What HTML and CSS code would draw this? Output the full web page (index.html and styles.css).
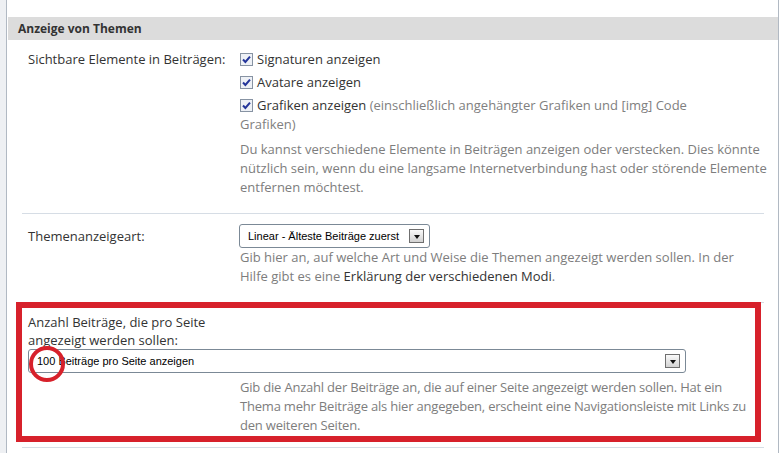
FILE: index.html
```html
<!DOCTYPE html>
<html lang="de">
<head>
  <meta charset="UTF-8">
  <title>Anzeige von Themen</title>
  <link rel="stylesheet" href="styles.css">
</head>
<body>
  <svg class="defs" xmlns="http://www.w3.org/2000/svg">
    <symbol id="checked" viewBox="0 0 13 13">
      <rect x="0.5" y="0.5" width="12" height="12" fill="#eef1f6" stroke="#8793a3"/>
      <path d="M3 6.5 L5.4 9 L10 3.6" fill="none" stroke="#24359a" stroke-width="2"/>
    </symbol>
  </svg>

  <div class="page">
    <div class="gutter"></div>
    <div class="panel">
      <h3 class="panel-head">Anzeige von Themen</h3>

      <div class="row">
        <div class="label">Sichtbare Elemente in Beiträgen:</div>
        <div class="field">
          <div class="checks">
            <label class="check"><svg class="box"><use href="#checked"/></svg>Signaturen anzeigen</label>
            <label class="check"><svg class="box"><use href="#checked"/></svg>Avatare anzeigen</label>
            <label class="check"><svg class="box"><use href="#checked"/></svg>Grafiken anzeigen <span class="muted">(einschließlich angehängter Grafiken und [img] Code Grafiken)</span></label>
          </div>
          <p class="explain">Du kannst verschiedene Elemente in Beiträgen anzeigen oder verstecken. Dies könnte<br>
            nützlich sein, wenn du eine langsame Internetverbindung hast oder störende Elemente<br>
            entfernen möchtest.</p>
        </div>
      </div>

      <div class="row">
        <div class="label label-mid">Themenanzeigeart:</div>
        <div class="field">
          <div class="select select-short">
            <span>Linear - Älteste Beiträge zuerst</span>
            <span class="select-btn"></span>
          </div>
          <p class="explain">Gib hier an, auf welche Art und Weise die Themen angezeigt werden sollen. In der<br>
            Hilfe gibt es eine <a href="#">Erklärung der verschiedenen Modi</a>.</p>
        </div>
      </div>

      <div class="row row-stacked highlight">
        <div class="label label-wrap">Anzahl Beiträge, die pro Seite angezeigt werden sollen:</div>
        <div class="select select-wide">
          <span>100 Beiträge pro Seite anzeigen</span>
          <span class="select-btn"></span>
        </div>
        <p class="explain explain-indent">Gib die Anzahl der Beiträge an, die auf einer Seite angezeigt werden sollen. Hat ein<br>
          Thema mehr Beiträge als hier angegeben, erscheint eine Navigationsleiste mit Links zu<br>
          den weiteren Seiten.</p>
        <svg class="ring" viewBox="0 0 40 40" xmlns="http://www.w3.org/2000/svg">
          <circle cx="20" cy="20" r="16" fill="none" stroke="#d7212b" stroke-width="4"/>
        </svg>
      </div>
    </div>
  </div>
</body>
</html>
```

FILE: styles.css
```css
body {
  margin: 0;
  background: #fff;
  font-family: "Open Sans", sans-serif;
  color: #333;
}

.defs {
  position: absolute;
  width: 0;
  height: 0;
}

.page {
  display: flex;
  height: 453px;
  overflow: hidden;
}
.gutter {
  width: 6px;
  background: #eef0f3;
}
.panel {
  width: 770px;
  padding: 17px 0 0 1px;
  border-left: 1px solid #b1b9c3;
  border-right: 1px solid #b1b9c3;
  background: #fff;
}

.panel-head {
  margin: 0;
  height: 23px;
  padding-left: 10px;
  background: #dcdcdc;
  font-size: 12px;
  font-weight: bold;
  line-height: 23px;
  color: #333;
}

.row {
  display: grid;
  grid-template-columns: 212px 1fr;
  margin: 0 14px;
  padding: 10px 0 16px 6px;
  border-bottom: 1px solid #d6dde5;
}
.row + .row {
  padding-top: 10px;
}

.label {
  font-size: 13px;
  line-height: 19px;
  color: #333;
}
.label-mid {
  line-height: 24px;
}

.checks {
  width: 480px;
}
.check {
  display: block;
  font-size: 13px;
  line-height: 19px;
  color: #333;
  margin-bottom: 4px;
}
.check:last-child {
  margin-bottom: 0;
}
.check .box {
  width: 13px;
  height: 13px;
  margin-right: 4px;
  vertical-align: -2px;
}
.muted {
  color: #808080;
}

.explain {
  margin: 6px -4px 0 0;
  font-size: 13px;
  line-height: 19px;
  color: #7d7d7d;
}
.explain a {
  color: #333;
  text-decoration: none;
}

.select {
  display: flex;
  align-items: center;
  box-sizing: border-box;
  height: 24px;
  padding-left: 8px;
  border: 1px solid #7b8996;
  border-radius: 3px;
  background: #fff;
  font-family: "Liberation Sans", Arial, sans-serif;
  font-size: 11px;
  color: #000;
}
.select-short {
  width: 191px;
  margin-left: -1px;
}
.select + .explain {
  margin-top: 0;
}
.select-btn {
  display: flex;
  align-items: center;
  justify-content: center;
  box-sizing: border-box;
  width: 15px;
  height: 14px;
  margin-left: auto;
  margin-right: 5px;
  border: 1px solid #6f6f6f;
  background: linear-gradient(#fafafa, #d2d2d2);
}
.select-btn::after {
  content: "";
  border-left: 3px solid transparent;
  border-right: 3px solid transparent;
  border-top: 4px solid #111;
  margin-top: 1px;
}

.row-stacked {
  display: block;
  padding-top: 13px;
  padding-bottom: 12px;
}
.row-stacked .label-wrap {
  width: 200px;
  line-height: 18px;
}
.select-wide {
  width: 658px;
}
.row-stacked .explain-indent {
  margin-left: 212px;
  margin-top: 5px;
  letter-spacing: -0.2px;
}

/* annotation overlays */
.highlight {
  position: relative;
}
.highlight::before {
  content: "";
  position: absolute;
  left: -6px;
  top: -1px;
  width: 745px;
  height: 140px;
  box-sizing: border-box;
  border: 6px solid #d7212b;
}
.ring {
  position: absolute;
  left: 5px;
  top: 41px;
  width: 40px;
  height: 40px;
}
```
